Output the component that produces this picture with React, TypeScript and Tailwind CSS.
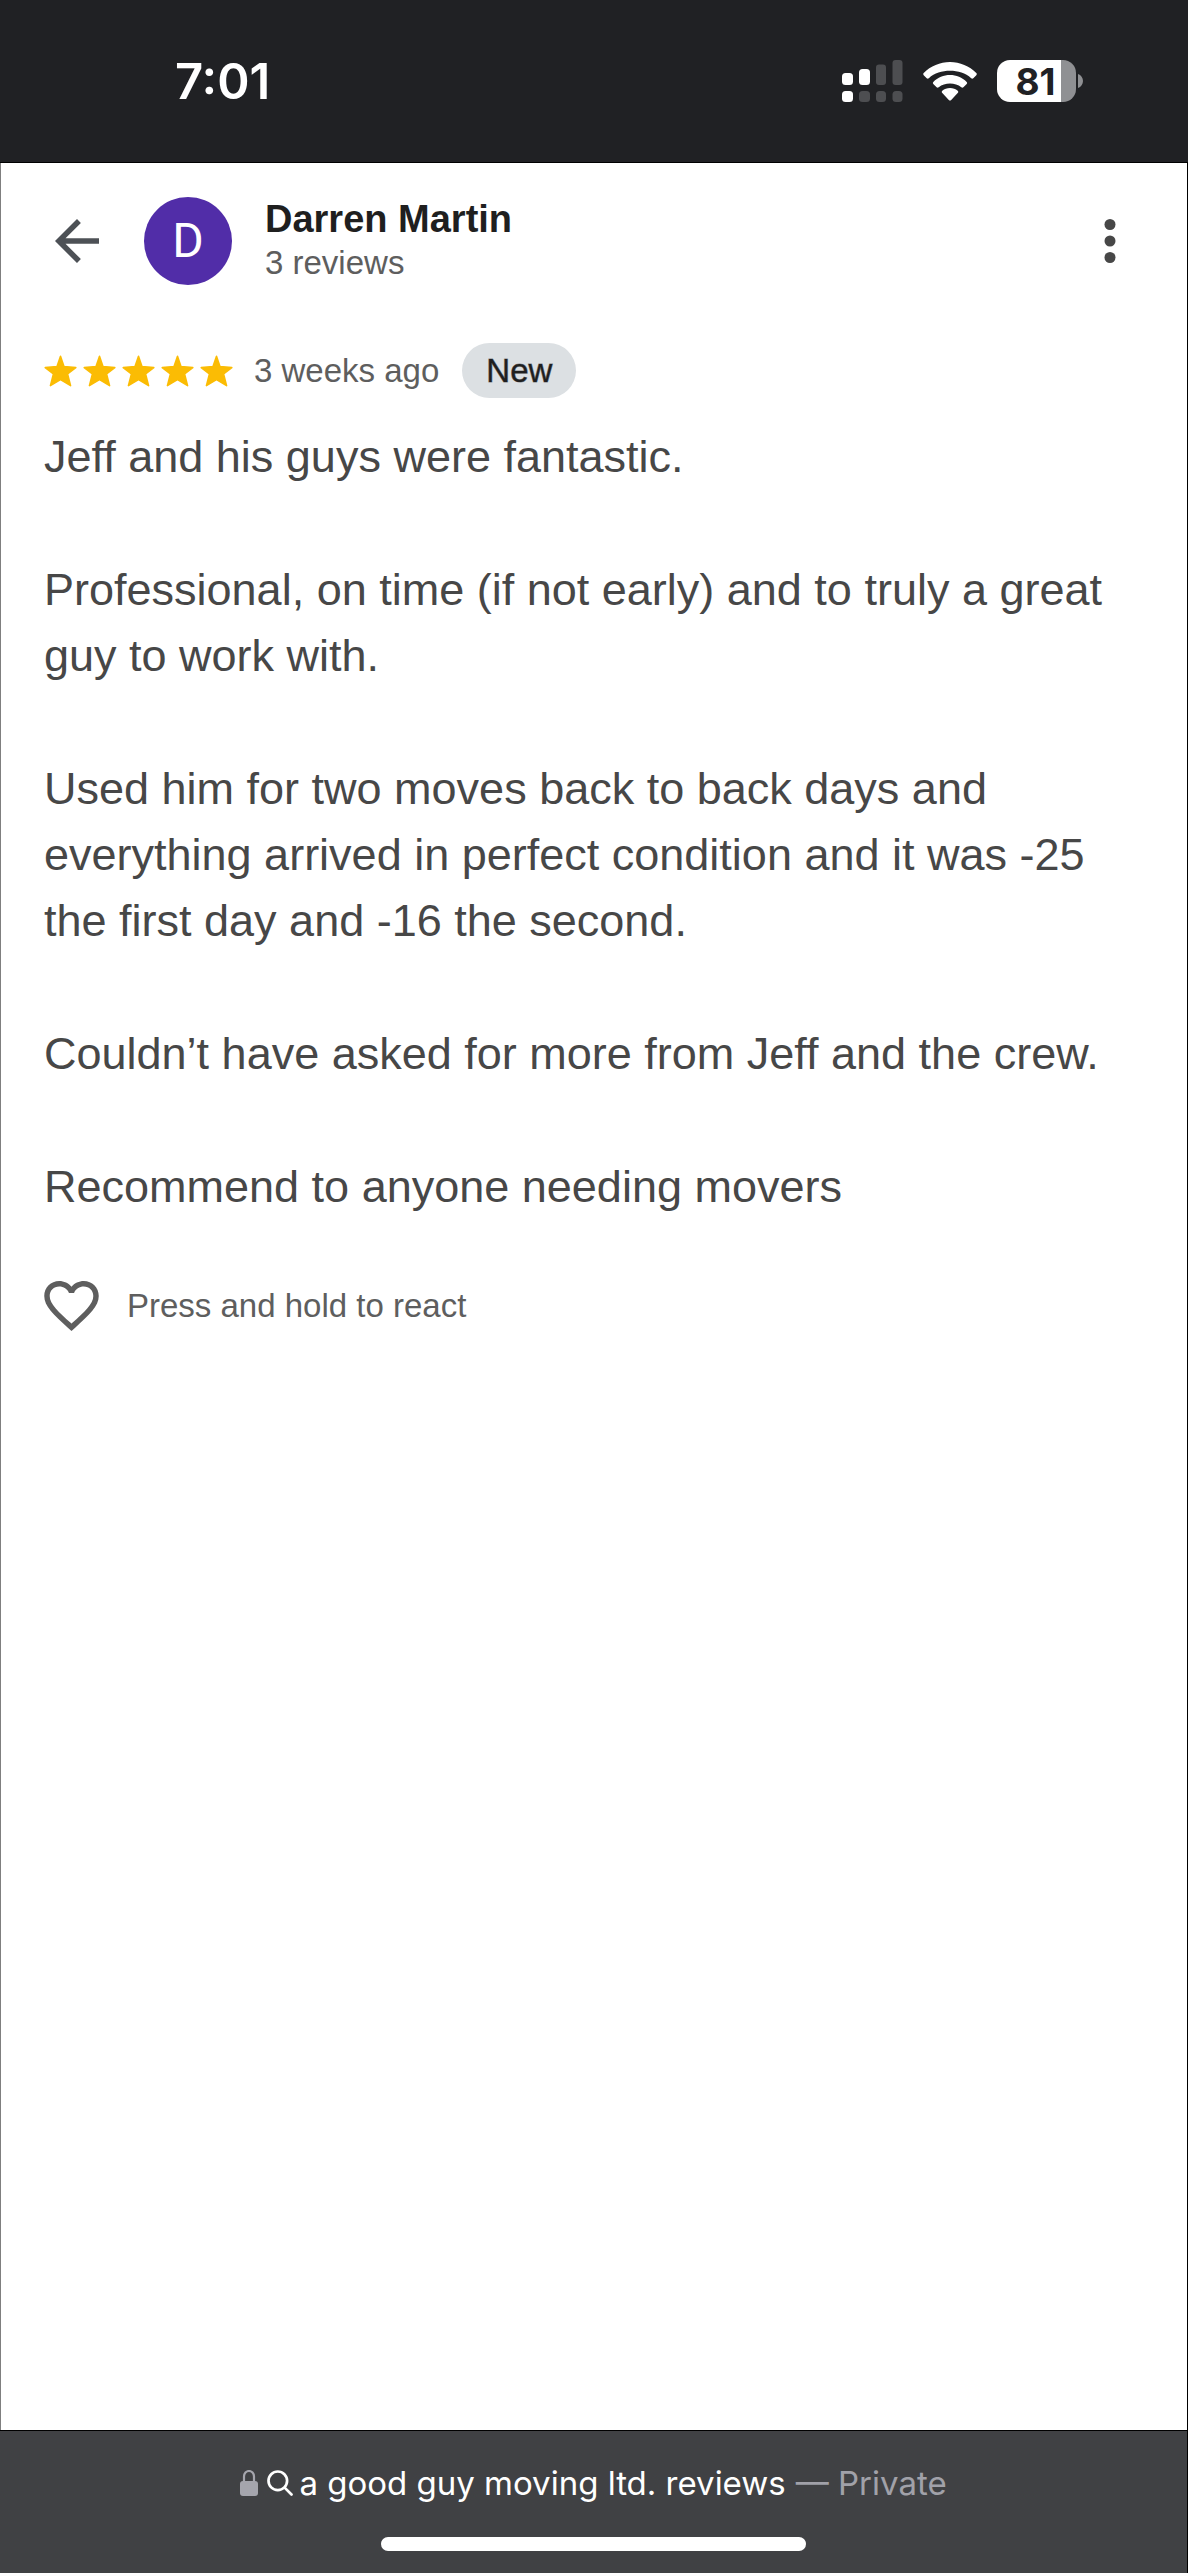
const paragraphs = [
  "Jeff and his guys were fantastic.",
  "Professional, on time (if not early) and to truly a great guy to work with.",
  "Used him for two moves back to back days and everything arrived in perfect condition and it was -25 the first day and -16 the second.",
  "Couldn’t have asked for more from Jeff and the crew.",
  "Recommend to anyone needing movers",
];

function SignalIcon() {
  return (
    <svg className="h-[43px] w-[61px]" viewBox="0 0 61 43" aria-hidden="true">
      <g fill="#fff">
        <rect x="0" y="13" width="11" height="12" rx="3.5" />
        <rect x="17" y="9" width="11" height="16" rx="3.5" />
        <rect x="0" y="31" width="11" height="11" rx="3.5" />
      </g>
      <g fill="#4d4e51">
        <rect x="34" y="4.5" width="10" height="20.5" rx="3" />
        <rect x="50.5" y="0" width="10" height="25" rx="3" />
        <rect x="17" y="31" width="11" height="11" rx="3.5" />
        <rect x="34" y="31" width="10" height="11" rx="3.5" />
        <rect x="50.5" y="31" width="10" height="11" rx="3.5" />
      </g>
    </svg>
  );
}

function WifiIcon() {
  return (
    <svg className="h-[39px] w-[54px]" viewBox="0 0 54 39" fill="#fff" aria-hidden="true">
      <path d="M27 0C37 0 46.4 4 53.3 11Q54.3 12.1 53.3 13.2L50.3 16.2Q49.3 17.1 48.2 16.2C42.5 10.7 35 8.7 27 8.7S11.5 10.7 5.8 16.2Q4.7 17.1 3.7 16.2L.7 13.2Q-.3 12.1 .7 11C7.6 4 17 0 27 0Z" />
      <path d="M27 13C33.3 13 39.2 15.5 43.7 19.9Q44.7 21 43.7 22.1L40.4 25.3Q39.4 26.2 38.3 25.3C35.2 22.5 31.2 21.4 27 21.4S18.8 22.5 15.7 25.3Q14.6 26.2 13.6 25.3L10.3 22.1Q9.3 21 10.3 19.9C14.8 15.5 20.7 13 27 13Z" />
      <path d="M27 26C30 26 32.6 27 34.7 28.8Q35.8 29.9 34.7 31L28.2 38Q27 39.2 25.8 38L19.3 31Q18.2 29.9 19.3 28.8C21.4 27 24 26 27 26Z" />
    </svg>
  );
}

function Battery() {
  return (
    <div className="flex items-center gap-[2px]" role="img" aria-label="Battery 81 percent">
      <div className="flex h-[42px] w-[79px] items-center justify-center rounded-[13px] bg-linear-to-r from-white from-81% to-[#8f9093] to-81% pr-[2px]">
        <span className='font-["Inter",sans-serif] text-[37px] leading-none font-bold text-[#202124]'>81</span>
      </div>
      <svg className="h-[14px] w-[5px]" viewBox="0 0 5 14" fill="#8f9093" aria-hidden="true">
        <path d="M0 0C3 1 5 4 5 7S3 13 0 14Z" />
      </svg>
    </div>
  );
}

function Star() {
  return (
    <svg className="h-[32px] w-[33px]" viewBox="0 0 34 33" fill="#fbbc04" stroke="#fbbc04" strokeWidth="1.6" strokeLinejoin="round" aria-hidden="true">
      <path d="M17 1.3 20.7 12 32.8 13 24.3 19.6 27.4 31.6 17 25.4 6.6 31.6 9.7 19.6 1.2 13 13.3 12Z" />
    </svg>
  );
}

function StatusBar() {
  return (
    <header className="flex h-[163px] items-center justify-between border-b border-black bg-[#202124] pr-[105px] pl-[175px]">
      <time className='font-["Inter",sans-serif] text-[49px] leading-none font-semibold text-white'>7:01</time>
      <div className="flex items-center gap-5">
        <SignalIcon />
        <WifiIcon />
        <Battery />
      </div>
    </header>
  );
}

function AuthorRow() {
  return (
    <div className="flex items-center pt-[34px] pr-[44px] pl-[43px]">
      <button type="button" aria-label="Back">
        <svg className="size-[66px]" viewBox="0 0 24 24" fill="#4d5156">
          <path d="M20 11H7.83l5.59-5.59L12 4l-8 8 8 8 1.41-1.41L7.83 13H20v-2z" />
        </svg>
      </button>
      <div className='ml-[34px] flex size-[88px] items-center justify-center rounded-full bg-[#512da8] font-["Roboto",sans-serif] text-[48px] leading-none text-white'>
        D
      </div>
      <div className="ml-[33px] flex-1">
        <h1 className="text-[38px] leading-[44px] font-bold text-[#1f1f1f]">Darren Martin</h1>
        <p className="text-[33px] leading-[44px] text-[#5e5e5e]">3 reviews</p>
      </div>
      <button type="button" aria-label="More options">
        <svg className="size-[66px]" viewBox="0 0 24 24" fill="#474747">
          <circle cx="12" cy="6" r="2" />
          <circle cx="12" cy="12" r="2" />
          <circle cx="12" cy="18" r="2" />
        </svg>
      </button>
    </div>
  );
}

export default function App() {
  return (
    <div className='flex min-h-screen flex-col bg-white font-["Liberation_Sans",Arial,sans-serif]'>
      <StatusBar />
      <main className="flex-1 border-r border-l border-r-black border-l-[#7f7f7f]">
        <AuthorRow />
        <article className="pr-[60px] pl-[43px]">
          <div className="mt-[58px] flex items-center">
            <div className="flex gap-[6px]" role="img" aria-label="5 out of 5 stars">
              <Star />
              <Star />
              <Star />
              <Star />
              <Star />
            </div>
            <span className="ml-[21px] text-[33px] leading-[44px] text-[#5e5e5e]">3 weeks ago</span>
            <span className="ml-[23px] rounded-full bg-[#dce0e3] px-[24px] text-[33px] leading-[55px] text-[#1f1f1f] [-webkit-text-stroke:1px_#1f1f1f80]">
              New
            </span>
          </div>
          <div className="mt-[26px] flex flex-col gap-[67px] text-[45px] leading-[66px] text-[#474747]">
            {paragraphs.map((text) => (
              <p key={text}>{text}</p>
            ))}
          </div>
          <button type="button" className="mt-[61px] flex items-center gap-[28px] text-[33px] leading-[44px] text-[#5e5e5e]">
            <svg className="h-[50px] w-[55px]" viewBox="2 3 20 18.35" fill="#5e5e5e" aria-hidden="true">
              <path d="M16.5 3c-1.74 0-3.41.81-4.5 2.09C10.91 3.81 9.24 3 7.5 3 4.42 3 2 5.42 2 8.5c0 3.78 3.4 6.86 8.55 11.54L12 21.35l1.45-1.32C18.6 15.36 22 12.28 22 8.5 22 5.42 19.58 3 16.5 3zm-4.4 15.55-.1.1-.1-.1C7.14 14.24 4 11.39 4 8.5 4 6.5 5.5 5 7.5 5c1.54 0 3.04.99 3.57 2.36h1.87C13.46 5.99 14.96 5 16.5 5c2 0 3.5 1.5 3.5 3.5 0 2.89-3.14 5.74-7.9 10.05z" />
            </svg>
            Press and hold to react
          </button>
        </article>
      </main>
      <footer className='flex h-[143px] flex-col items-center justify-between border-t border-r border-black bg-[#404144] pt-[30px] pb-[22px] font-["Inter",sans-serif]'>
        <div className="flex items-center text-[33px] leading-[44px] text-white">
          <svg className="h-[26px] w-[18px]" viewBox="0 0 18 26" aria-hidden="true">
            <path d="M4 13V6.5a5 5.5 0 0 1 10 0V13" fill="none" stroke="#a5a5ad" strokeWidth="2.2" />
            <rect x="0" y="11" width="18" height="15" rx="3" fill="#a5a5ad" />
          </svg>
          <svg className="ml-[9px] size-[26px]" viewBox="0 0 26 26" fill="none" stroke="#fff" strokeWidth="2.7" strokeLinecap="round" aria-hidden="true">
            <circle cx="10.8" cy="10.8" r="9.3" />
            <path d="M17.6 17.6 24.5 24.5" />
          </svg>
          <span className="ml-[6px]">a good guy moving ltd. reviews</span>
          <span className="ml-[10px] text-[#a1a1a9]">— Private</span>
        </div>
        <div className="h-[14px] w-[425px] rounded-full bg-white" />
      </footer>
    </div>
  );
}
